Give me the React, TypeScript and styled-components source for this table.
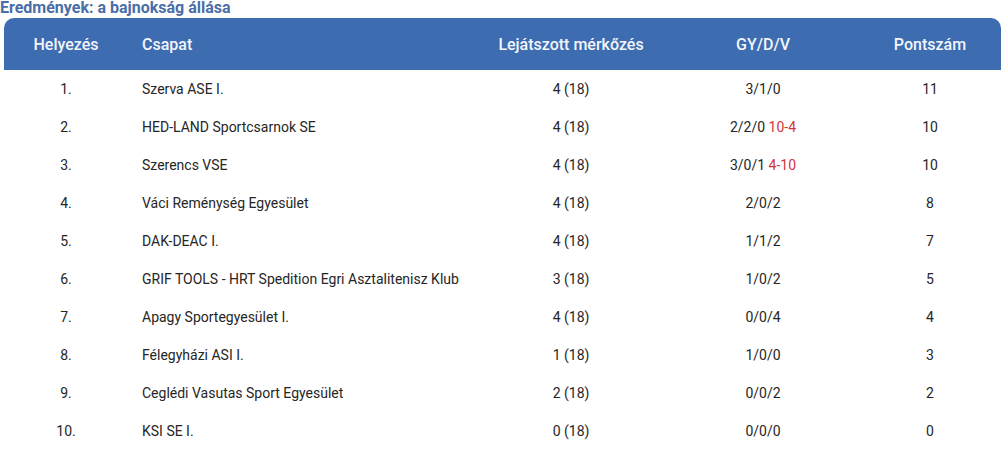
import React from "react";
import styled, { createGlobalStyle } from "styled-components";

const Global = createGlobalStyle`
  html, body { margin: 0; padding: 0; background: #fff; }
  body { font-family: Roboto, "Noto Sans", Arial, sans-serif; }
`;

const Page = styled.div`
  width: 1005px;
`;

const Title = styled.h2`
  margin: 0 0 2px 0;
  padding-left: 0;
  font-size: 16px;
  line-height: 16px;
  font-weight: 700;
  color: #4a6ea8;
  white-space: nowrap;
`;

const Table = styled.table`
  margin-left: 4px;
  width: 997px;
  border-collapse: separate;
  border-spacing: 0;
  table-layout: fixed;
`;

const HeadRow = styled.tr`
  background: #3d6cb1;
`;

const Th = styled.th<{ $align?: "left" | "center"; $first?: boolean; $last?: boolean }>`
  height: 52px;
  padding: 0;
  padding-left: ${(p) => (p.$align === "left" ? "14px" : "0")};
  text-align: ${(p) => p.$align ?? "center"};
  font-size: 16px;
  font-weight: 500;
  color: #f2f5fb;
  border-top-left-radius: ${(p) => (p.$first ? "10px" : "0")};
  border-top-right-radius: ${(p) => (p.$last ? "10px" : "0")};
`;

const Td = styled.td<{ $align?: "left" | "center" }>`
  height: 38px;
  padding: 0;
  padding-left: ${(p) => (p.$align === "left" ? "14px" : "0")};
  text-align: ${(p) => p.$align ?? "center"};
  font-size: 14px;
  color: #262626;
  white-space: nowrap;
`;

const Score = styled.span`
  color: #d1343b;
`;

type Row = { pos: string; team: string; played: string; gdv: string; score?: string; pts: string };

const rows: Row[] = [
  { pos: "1.", team: "Szerva ASE I.", played: "4 (18)", gdv: "3/1/0", pts: "11" },
  { pos: "2.", team: "HED-LAND Sportcsarnok SE", played: "4 (18)", gdv: "2/2/0", score: "10-4", pts: "10" },
  { pos: "3.", team: "Szerencs VSE", played: "4 (18)", gdv: "3/0/1", score: "4-10", pts: "10" },
  { pos: "4.", team: "Váci Reménység Egyesület", played: "4 (18)", gdv: "2/0/2", pts: "8" },
  { pos: "5.", team: "DAK-DEAC I.", played: "4 (18)", gdv: "1/1/2", pts: "7" },
  { pos: "6.", team: "GRIF TOOLS - HRT Spedition Egri Asztalitenisz Klub", played: "3 (18)", gdv: "1/0/2", pts: "5" },
  { pos: "7.", team: "Apagy Sportegyesület I.", played: "4 (18)", gdv: "0/0/4", pts: "4" },
  { pos: "8.", team: "Félegyházi ASI I.", played: "1 (18)", gdv: "1/0/0", pts: "3" },
  { pos: "9.", team: "Ceglédi Vasutas Sport Egyesület", played: "2 (18)", gdv: "0/0/2", pts: "2" },
  { pos: "10.", team: "KSI SE I.", played: "0 (18)", gdv: "0/0/0", pts: "0" },
];

export default function App() {
  return (
    <Page>
      <Global />
      <Title>Eredmények: a bajnokság állása</Title>
      <Table>
        <colgroup>
          <col style={{ width: 124 }} />
          <col style={{ width: 347 }} />
          <col style={{ width: 192 }} />
          <col style={{ width: 192 }} />
          <col style={{ width: 142 }} />
        </colgroup>
        <thead>
          <HeadRow>
            <Th $first>Helyezés</Th>
            <Th $align="left">Csapat</Th>
            <Th>Lejátszott mérkőzés</Th>
            <Th>GY/D/V</Th>
            <Th $last>Pontszám</Th>
          </HeadRow>
        </thead>
        <tbody>
          {rows.map((r) => (
            <tr key={r.pos}>
              <Td>{r.pos}</Td>
              <Td $align="left">{r.team}</Td>
              <Td>{r.played}</Td>
              <Td>
                {r.gdv}
                {r.score && <> <Score>{r.score}</Score></>}
              </Td>
              <Td>{r.pts}</Td>
            </tr>
          ))}
        </tbody>
      </Table>
    </Page>
  );
}
